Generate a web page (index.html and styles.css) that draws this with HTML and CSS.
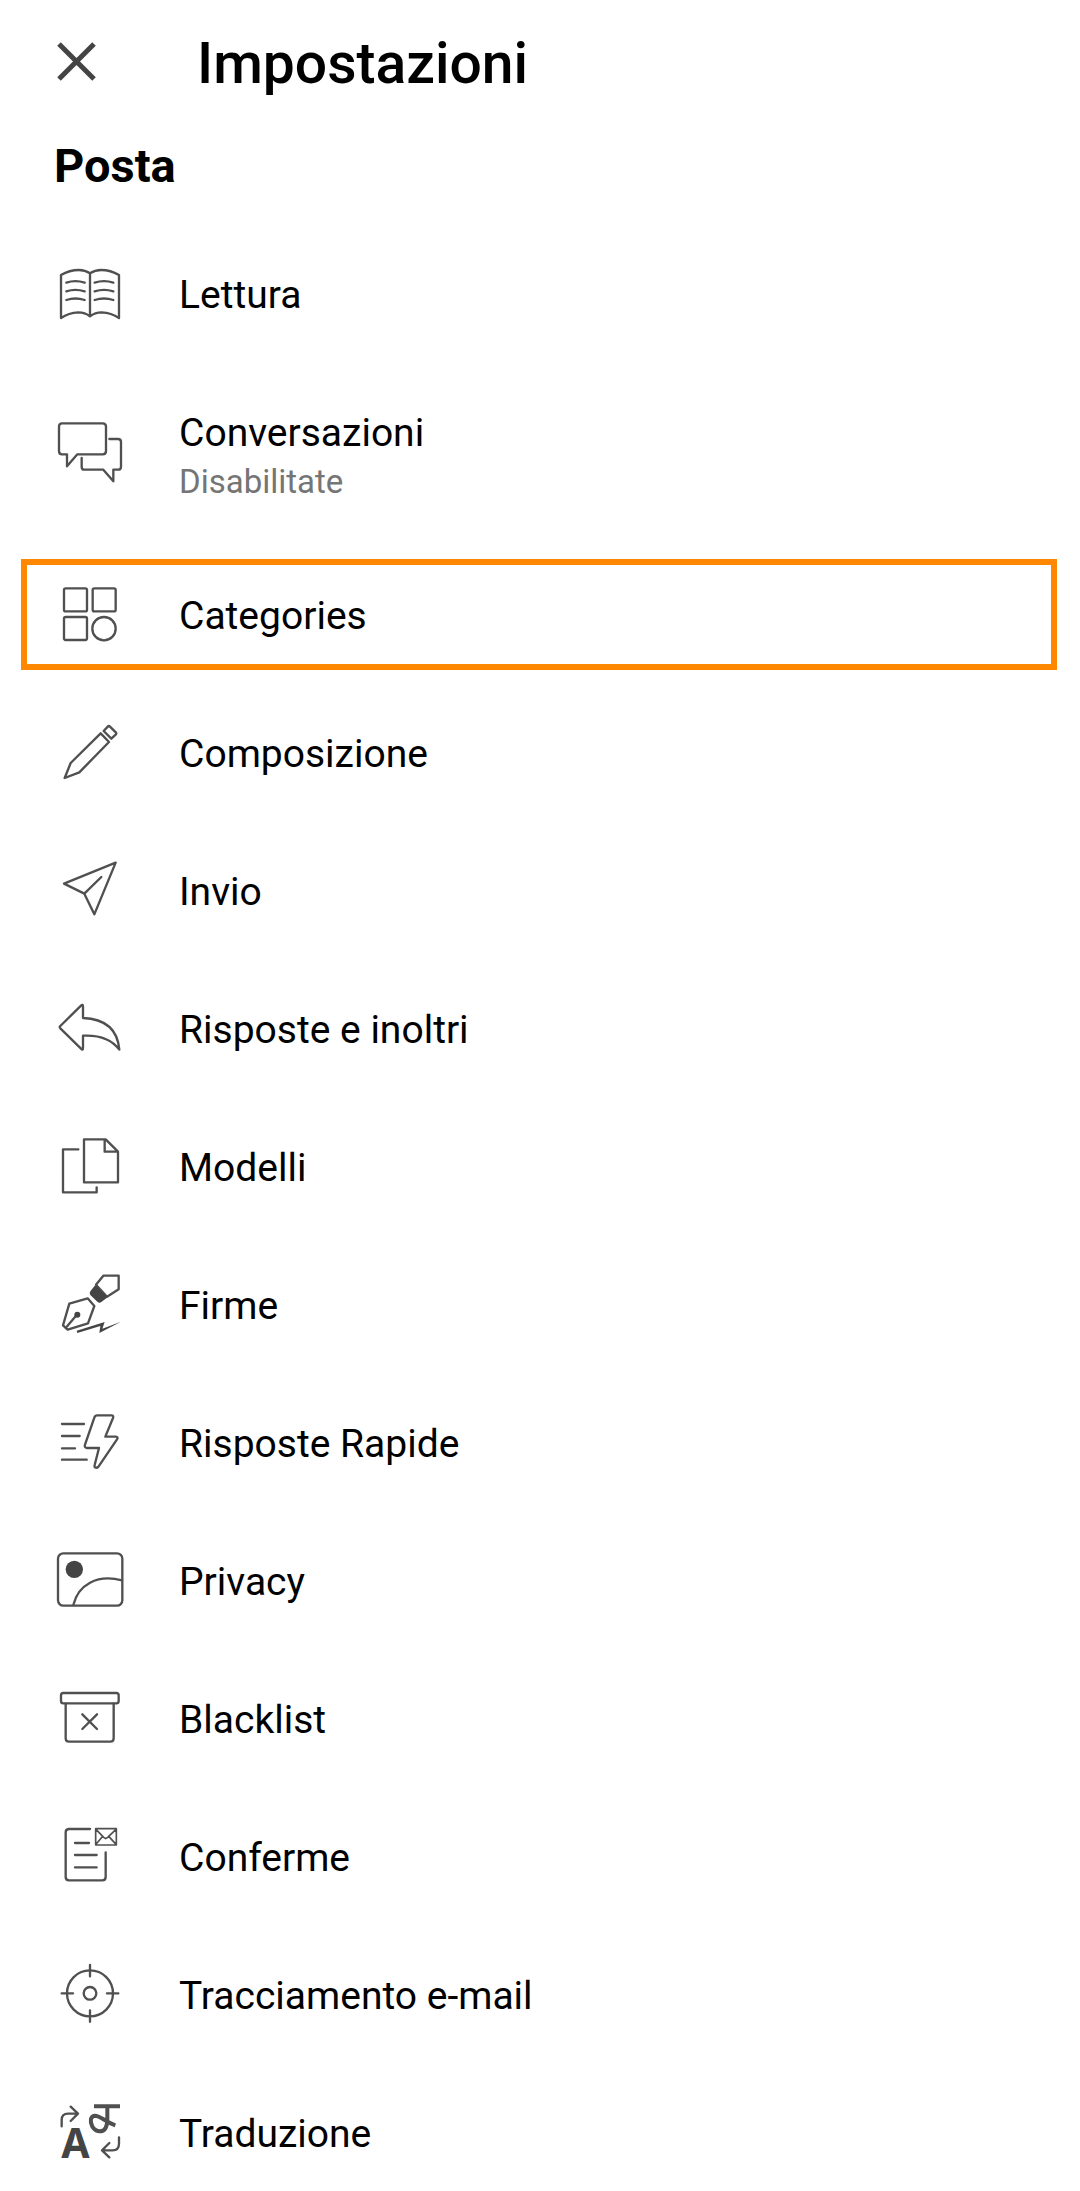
FILE: index.html
```html
<!DOCTYPE html>
<html lang="it">
<head>
<meta charset="utf-8">
<meta name="viewport" content="width=device-width, initial-scale=1">
<title>Impostazioni</title>
<link rel="stylesheet" href="styles.css">
</head>
<body>
<header class="topbar">
  <button class="close" type="button" aria-label="Chiudi">
    <svg viewBox="0 0 40 42" aria-hidden="true"><path d="M3 1 38 36M38 1 3 36"/></svg>
  </button>
  <h1 class="title">Impostazioni</h1>
</header>
<main class="content">
  <h2 class="section">Posta</h2>
  <ul class="list">
    <li><button class="row" type="button">
      <svg class="icon" viewBox="42 24 216 216" aria-hidden="true"><path d="M150 70Q135 60 117 60Q88 60 63 75V204Q86 188 115 187Q135 187 150 199Q165 187 185 187Q214 188 237 204V75Q212 60 183 60Q165 60 150 70V198M79 98Q106 89 134 98M79 124Q106 115 134 124M79 150Q106 141 134 150M164 98Q192 89 220 98M164 124Q192 115 220 124M164 150Q192 141 220 150"/></svg>
      <span class="label">Lettura</span>
    </button></li>
    <li><button class="row" type="button">
      <svg class="icon" viewBox="42 505 216 216" aria-hidden="true"><path d="M66 518H188Q198 518 198 528V601Q198 611 188 611H112L81 647V611H66Q57 611 57 601V528Q57 518 66 518ZM208 565H234Q243 565 243 574V648Q243 657 234 657H220V692L190 657H133Q125 657 125 648V622"/></svg>
      <span class="label">Conversazioni<span class="detail">Disabilitate</span></span>
    </button></li>
    <li class="highlight"><button class="row" type="button">
      <svg class="icon" viewBox="162 115 216 216" aria-hidden="true"><rect x="192" y="143" width="69" height="69" rx="5"/><rect x="278" y="143" width="69" height="69" rx="5"/><rect x="192" y="229" width="69" height="69" rx="5"/><circle cx="312" cy="264" r="35"/></svg>
      <span class="label">Categories</span>
    </button></li>
    <li><button class="row" type="button">
      <svg class="icon" viewBox="42 51 216 216" aria-hidden="true"><path d="M182 100 92 189 74 234 118 217 207 126ZM191 93 204 79Q207 77 210 80L228 98Q230 101 227 104L214 116Z"/></svg>
      <span class="label">Composizione</span>
    </button></li>
    <li><button class="row" type="button">
      <svg class="icon" viewBox="42 465 216 216" aria-hidden="true"><path d="M227 488 72 551 133 581 163 643ZM133 581 184 531"/></svg>
      <span class="label">Invio</span>
    </button></li>
    <li><button class="row" type="button">
      <svg class="icon" viewBox="42 39 216 216" aria-hidden="true"><path d="M61 138 123 77Q129 71 129 80V114Q230 118 238 209Q204 163 129 167V203Q129 213 123 206L61 145Q57 141 61 138Z"/></svg>
      <span class="label">Risposte e inoltri</span>
    </button></li>
    <li><button class="row" type="button">
      <svg class="icon" viewBox="42 453 216 216" aria-hidden="true"><path d="M132 478H197L234 515V607H132ZM194 480V515H232M115 508H69V637H170V622"/></svg>
      <span class="label">Modelli</span>
    </button></li>
    <li><button class="row" type="button">
      <svg class="icon" viewBox="42 57 216 216" aria-hidden="true"><path d="M88 161 143 145 163 168 144 220 83 239 69 226ZM77 234 110 195M168 104 190 77H236V118L201 140Z"/><path class="solid" d="M166 105 203 142 183 157Q177 160 172 155L151 135Q147 129 151 124Z"/><circle class="solid" cx="112" cy="194" r="9"/><path class="solid" d="M110 242 194 216 187 236 243 215 178 249 181 228 112 249Z"/></svg>
      <span class="label">Firme</span>
    </button></li>
    <li><button class="row" type="button">
      <svg class="icon" viewBox="42 471 216 216" aria-hidden="true"><path d="M66 522H132M66 558H119M66 595H105M66 629H140M172 496H214Q222 496 219 504L196 560H227Q236 561 231 568L176 649Q173 654 167 653Q162 652 164 645L177 594H141Q132 593 135 584L163 503Q165 496 172 496Z"/></svg>
      <span class="label">Risposte Rapide</span>
    </button></li>
    <li><button class="row" type="button">
      <svg class="icon" viewBox="42 45 216 216" aria-hidden="true"><rect x="54" y="70" width="193" height="157" rx="16"/><path d="M100 225C114 165 171 131 246 151"/><circle class="solid" cx="103" cy="118" r="26"/></svg>
      <span class="label">Privacy</span>
    </button></li>
    <li><button class="row" type="button">
      <svg class="icon" viewBox="42 459 216 216" aria-hidden="true"><rect x="63" y="489" width="173" height="31" rx="7"/><path d="M77 521V625Q77 635 87 635H211Q221 635 221 625V521M127 553 171 597M171 553 127 597"/></svg>
      <span class="label">Blacklist</span>
    </button></li>
    <li><button class="row" type="button">
      <svg class="icon" viewBox="42 63 216 216" aria-hidden="true"><path d="M150 87H86Q77 88 77 97V231Q77 241 87 241H187Q197 241 197 231V157M105 129H147M105 165H170M105 202H170"/><path class="fine" d="M167 86H229V135H167ZM168 88 191 112 197 116 203 112 228 88M168 133 187 110M228 133 207 110"/></svg>
      <span class="label">Conferme</span>
    </button></li>
    <li><button class="row" type="button">
      <svg class="icon" viewBox="42 477 216 216" aria-hidden="true"><circle cx="150" cy="580" r="69"/><circle cx="150" cy="580" r="19"/><path d="M150 495V529M150 631V665M65 580H99M201 580H235"/></svg>
      <span class="label">Tracciamento e-mail</span>
    </button></li>
    <li><button class="row" type="button">
      <svg class="icon" viewBox="42 51 216 216" aria-hidden="true"><path d="M65 139V120Q65 101 84 101H113M92 80 114 101 92 123M237 172V191Q237 211 217 211H187M208 189 186 211 208 232"/><path class="thick" d="M162 79H240M202 80V118Q201 154 180 154Q166 154 157 140C149 124 151 109 164 107C180 106 194 125 226 136"/><text class="glyph" x="106" y="234">A</text></svg>
      <span class="label">Traduzione</span>
    </button></li>
  </ul>
</main>
</body>
</html>
```
FILE: styles.css
```css
* {
  box-sizing: border-box;
}

body {
  margin: 0;
  height: 100vh;
  display: flex;
  flex-direction: column;
  background: #fff;
  color: #000;
  font-family: Roboto, "Liberation Sans", sans-serif;
}

button {
  border: 0;
  padding: 0;
  background: none;
  color: inherit;
  font: inherit;
  text-align: left;
  cursor: pointer;
}

.topbar {
  flex: none;
  display: flex;
  align-items: center;
  gap: 101px;
  height: 128px;
  padding: 0 56px;
}

.close {
  flex: none;
  width: 40px;
  height: 42px;
}

.close svg {
  display: block;
  overflow: visible;
  fill: none;
  stroke: #444;
  stroke-width: 5;
}

.title {
  margin: 0;
  font-size: 57px;
  line-height: 64px;
  font-weight: 500;
}

.content {
  flex: 1;
  min-height: 0;
  overflow-y: auto;
  scrollbar-width: none;
}

.section {
  margin: 0;
  padding: 10px 54px 31px;
  font-size: 47px;
  line-height: 56px;
  font-weight: 700;
}

.list {
  margin: 0;
  padding: 0;
  list-style: none;
}

.row {
  display: flex;
  align-items: center;
  gap: 53px;
  width: 100%;
  min-height: 138px;
  padding: 45px 54px;
}

.highlight {
  margin: 13px 23px 14px 21px;
  border: 6px solid #ff8800;
}

.highlight .row {
  min-height: 99px;
  padding: 0 27px;
}

.icon {
  flex: none;
  width: 72px;
  height: 72px;
  margin: -13px 0;
  fill: none;
  stroke: #505050;
  stroke-width: 7;
  stroke-linecap: round;
  stroke-linejoin: round;
}

.icon .solid {
  fill: #444;
  stroke: none;
}

.icon .fine {
  stroke-width: 5;
}

.icon .thick {
  stroke-width: 12;
  stroke-linecap: butt;
}

.icon .glyph {
  fill: #444;
  stroke: none;
  font-family: "Noto Sans", sans-serif;
  font-size: 123px;
  font-weight: 700;
  text-anchor: middle;
}

.label {
  padding-top: 2px;
  font-size: 39px;
  line-height: 46px;
}

.detail {
  display: block;
  margin-top: 7px;
  color: #757575;
  font-size: 33px;
  line-height: 38px;
}
```
